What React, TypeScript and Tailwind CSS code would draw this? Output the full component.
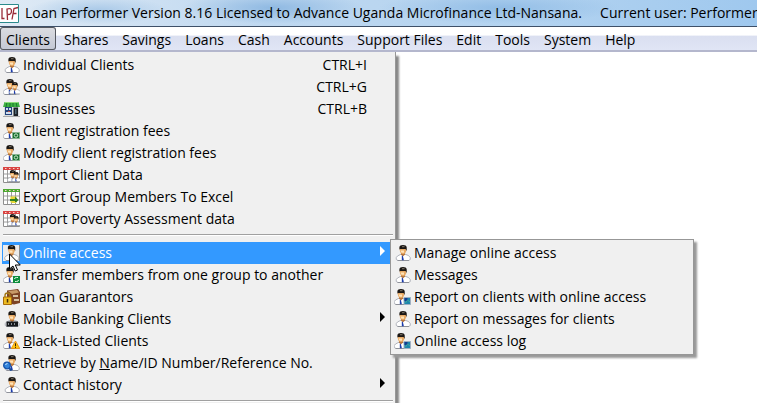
import React from "react";

type IconKind =
  | "person" | "group" | "shop" | "fees" | "import" | "export" | "online"
  | "transfer" | "guarantor" | "mobile" | "blacklist" | "search" | "report";

function Person({ coat = "#ffffff" }: { coat?: string }) {
  return (
    <g>
      <path d="M.8 14.500Q0 12.500 2 11L5.500 9.200H9.500L13 10.500Q15.500 12.500 14.800 14.500L13 15.500H2.500Z" fill={coat} stroke="#a9adb5" strokeWidth=".9" />
      <path d="M2 15.500h11.500" stroke="#85888f" strokeWidth=".8" />
      <path d="M5.500 7.500h4v2L7.500 11.500 5.500 9.500Z" fill="#b87840" />
      <path d="M4.300 3h6.400v3.500Q10 9 7.500 9T4.300 6Z" fill="#e9ab66" />
      <path d="M5 5.500h3.500v2.300H6Z" fill="#ffe3b8" />
      <path d="M3.900 4.500V2Q4.200 0 7.500 0T11.200 2.300V6L10 4H5Z" fill="#1a1613" />
      <path d="M6.500 1.200h2.500v1H6.500Z" fill="#81796b" />
      <path d="m6.300 10.500 1 .5 1 3.500-.6 1-1.400-.5Z" fill="#1c3cab" />
    </g>
  );
}

function Sheet({ head }: { head: string }) {
  return (
    <g>
      <path d="M.5 1h16v14.500H.5Z" fill="#fff" stroke="#8e8e8e" />
      <path d="M0 0h17v3H0Z" fill={head} />
      <path d="M2 1.500h1.500M6 1.500h1.500M10 1.500h1.500M14 1.500h1.500" stroke="#f7d7cf" />
      <path d="M1 7h15M1 11h15M4.500 3v12M8.500 3v12M12.500 3v12" stroke="#929292" strokeWidth=".9" />
    </g>
  );
}

function MenuIcon({ kind }: { kind: IconKind }) {
  return (
    <svg viewBox="0 0 17 16" className="h-4 w-[17px] shrink-0" aria-hidden="true">
      {kind === "person" && <g transform="translate(1.500 0)"><Person /></g>}
      {kind === "online" && (
        <g>
          <path d="M0 0h17v16H0Z" fill="#ececec" />
          <path d="M16.500 0v16" stroke="#8c8c8c" />
          <g transform="translate(1 0)"><Person /></g>
        </g>
      )}
      {kind === "group" && (
        <g>
          <g transform="translate(-.500 0)"><Person /></g>
          <g transform="translate(6 3) scale(.78)"><Person /></g>
        </g>
      )}
      {kind === "shop" && (
        <g>
          <path d="M1 5h15v10H1Z" fill="#d9dde0" />
          <path d="M2 6h7v8H2Z" fill="#24437c" />
          <path d="M3 7h2v2H3ZM6 7h2v2H6ZM3 11h5v2H3Z" fill="#cfdcec" />
          <path d="M5 10h2v1H5Z" fill="#b84b46" />
          <path d="M10.500 6.500h4.500v8.500h-4.500Z" fill="#1c2126" />
          <path d="M12 8h1.500v5H12Z" fill="#4f6774" />
          <path d="M1.500 1h14L17 6H0Z" fill="#3fb043" />
          <path d="M4 1 3 6M7 1v5M10 1v5M13 1l1 5" stroke="#187d2b" />
          <path d="M2 1.500h13" stroke="#8bdc78" />
          <path d="M0 15.500h17" stroke="#aaaaaa" />
        </g>
      )}
      {(kind === "fees" || kind === "transfer" || kind === "report" || kind === "blacklist") && (
        <g transform="translate(-.500 0)"><Person /></g>
      )}
      {kind === "fees" && (
        <g>
          <path d="M9.500 9.500h7v6h-7Z" fill="#17702f" stroke="#8ab391" />
          <circle cx="13" cy="12.500" r="1.700" fill="none" stroke="#cce6cc" />
        </g>
      )}
      {kind === "transfer" && (
        <g>
          <path d="M10 9h7v7h-7Z" fill="#0d8d3c" />
          <path d="M11.500 12q0-1.500 2-1.500h1.500M15.500 13q0 1.500-2 1.500H12" fill="none" stroke="#e2f6e3" />
        </g>
      )}
      {kind === "report" && (
        <g>
          <path d="M10 8.500h6.500v7H10Z" fill="#1d86ad" stroke="#9fb0c2" />
          <path d="M10.500 9h3v3h-3Z" fill="#123d91" />
          <path d="m11.500 14 2-3 2.500 2" fill="none" stroke="#43a59c" />
        </g>
      )}
      {kind === "blacklist" && (
        <g>
          <path d="m12.500 8 4.300 7.500H8.200Z" fill="#ffc414" stroke="#e58a0a" strokeWidth=".8" />
          <path d="M12.500 10.300v2.700M12.500 13.700v1.200" stroke="#3a2300" />
        </g>
      )}
      {kind === "import" && (
        <g>
          <Sheet head="#d94442" />
          <g transform="translate(4 3) scale(.75)"><Person /></g>
          <g transform="translate(8.500 5) scale(.62)"><Person /></g>
        </g>
      )}
      {kind === "export" && (
        <g>
          <Sheet head="#4da832" />
          <path d="M7.500 7.500h6v6h-6Z" fill="#e7d936" />
          <path d="M7 10h5V7.500l3.500 3.500-3.500 3.500V12H7Z" fill="#2f7f25" />
          <path d="M9 13.500h4" stroke="#e7d936" />
        </g>
      )}
      {kind === "guarantor" && (
        <g>
          <path d="M4 1.500 15 0l2 3v11l-6 1.500L4 14Z" fill="#7d4425" />
          <path d="m5 2 9-1 2 2.500-7 1.500Z" fill="#c79a68" />
          <path d="M10 6h5v2h-5ZM11 10h5v2h-5Z" fill="#d5c0a0" />
          <path d="M2 9V6.500Q2 4 4.500 4T7 6.500V9" fill="none" stroke="#a47918" strokeWidth="1.400" />
          <path d="M.5 8h8v7.500h-8Z" fill="#edbb22" stroke="#a76c0b" />
          <path d="M4.500 10v3.500" stroke="#49310a" strokeWidth="1.500" />
        </g>
      )}
      {kind === "mobile" && (
        <g>
          <g transform="translate(1.500 0)"><Person coat="#e4e6ea" /></g>
          <path d="M3.500 10.500h11.500v5H3.500Z" fill="#16181c" />
          <path d="M5.500 12v2M8.500 12v2M11.500 12v2" stroke="#8a8d94" />
        </g>
      )}
      {kind === "search" && (
        <g>
          <g transform="translate(1.500 0)"><Person /></g>
          <path d="m6 13 2.500 2.500" stroke="#164a98" strokeWidth="2" />
          <circle cx="4" cy="10.500" r="3.300" fill="#3284dc" stroke="#1450a7" strokeWidth="1.300" />
          <path d="M2.500 10q.5-1.500 2-1.500" stroke="#c9e6ff" fill="none" />
        </g>
      )}
    </svg>
  );
}

type Item = { icon: IconKind; label: React.ReactNode; keys?: string; sub?: boolean; active?: boolean };

const groups: Item[][] = [
  [
    { icon: "person", label: "Individual Clients", keys: "CTRL+I" },
    { icon: "group", label: "Groups", keys: "CTRL+G" },
    { icon: "shop", label: "Businesses", keys: "CTRL+B" },
    { icon: "fees", label: "Client registration fees" },
    { icon: "fees", label: "Modify client registration fees" },
    { icon: "import", label: "Import Client Data" },
    { icon: "export", label: "Export Group Members To Excel" },
    { icon: "import", label: "Import Poverty Assessment data" },
  ],
  [
    { icon: "online", label: "Online access", sub: true, active: true },
    { icon: "transfer", label: "Transfer members from one group to another" },
    { icon: "guarantor", label: "Loan Guarantors" },
    { icon: "mobile", label: "Mobile Banking Clients", sub: true },
    { icon: "blacklist", label: <><u>B</u>lack-Listed Clients</> },
    { icon: "search", label: <>Retrieve by <u>N</u>ame/ID Number/Reference No.</> },
    { icon: "person", label: "Contact history", sub: true },
  ],
];

const submenu: Item[] = [
  { icon: "person", label: "Manage online access" },
  { icon: "person", label: "Messages" },
  { icon: "report", label: "Report on clients with online access" },
  { icon: "person", label: "Report on messages for clients" },
  { icon: "report", label: "Online access log" },
];

const menus = ["Clients", "Shares", "Savings", "Loans", "Cash", "Accounts", "Support Files", "Edit", "Tools", "System", "Help"];

function Row({ item }: { item: Item }) {
  return (
    <button
      type="button"
      role="menuitem"
      className={`flex h-[22px] w-full items-center gap-[3px] whitespace-nowrap pl-px text-left ${item.active ? "bg-[#3399ff] text-white" : ""}`}
    >
      <MenuIcon kind={item.icon} />
      <span className="grow">{item.label}</span>
      {item.keys && <span className="pr-7">{item.keys}</span>}
      {item.sub && (
        <svg viewBox="0 0 5 10" className="mr-2.5 mb-1 h-2.5 w-[5px]" aria-hidden="true">
          <path d="M0 0 5 5 0 10Z" fill="currentColor" />
        </svg>
      )}
    </button>
  );
}

function Divider() {
  return <div role="separator" className="mr-0.5 ml-px h-3 pt-1"><div className="h-0.5 border-t border-[#a0a0a0] bg-white" /></div>;
}

export default function App() {
  return (
    <div className="relative flex h-screen flex-col overflow-hidden bg-white font-['Open_Sans','Noto_Sans',sans-serif] text-[14px] leading-5 text-black">
      <header className="flex h-[27px] shrink-0 items-center gap-1.5 whitespace-pre border-b border-[#3e5068] bg-[radial-gradient(ellipse_70px_14px_at_13%_40%,#a9c9e8,transparent),radial-gradient(ellipse_90px_16px_at_36%_30%,#8fb9e2,transparent),radial-gradient(ellipse_120px_16px_at_66%_30%,#92bde6,transparent),linear-gradient(to_right,#dfeaf5,#bfd8f0_35%,#b3d3f0_70%,#9fc8ee)]">
        <svg viewBox="0 0 19 19" className="h-[19px] w-[19px] shrink-0" aria-hidden="true">
          <path d="M0 .5h18.500v18H0" fill="#fff" stroke="#2b8a8c" />
          <path d="M2 4v10.500h2.500M7.500 16 7 5q4.500-1.500 4.500 2T8 10.500M12 15.500 14 4.500l4-1M13 9.500h3.500" fill="none" stroke="#9a2b38" strokeWidth="1.300" />
        </svg>
        <h1>Loan Performer Version 8.16 Licensed to Advance Uganda Microfinance Ltd-Nansana.     Current user: Performer</h1>
      </header>
      <nav aria-label="Main menu" className="flex h-[25px] shrink-0 items-center gap-0.5 border-b-2 border-[#b4b7cd] bg-linear-to-b from-white from-35% via-[#dadff0] via-40% to-[#e0e5f5]">
        {menus.map((name, i) => (
          <button
            key={name}
            type="button"
            className={`h-[23px] whitespace-nowrap px-1.5 pt-0.5 ${i === 0 ? "rounded-[3px] bg-linear-to-b from-[#dcdde1] to-[#c3c7d4] ring-1 ring-[#55585f] ring-inset" : ""}`}
          >
            {name}
          </button>
        ))}
      </nav>
      <main className="grow" />
      <div role="menu" aria-label="Clients" className="absolute top-[52px] -bottom-5 left-0 w-[396px] border-r border-[#979797] bg-[#f0f0f0] pt-0.5 pl-0.5 shadow-[3px_4px_2px_#888888]">
        {groups.map((items, i) => (
          <div key={i}>
            {items.map((item, j) => <Row key={j} item={item} />)}
            <Divider />
          </div>
        ))}
      </div>
      <div role="menu" aria-label="Online access" className="absolute top-[239px] left-[390px] w-[304px] border border-[#979797] bg-[#f0f0f0] p-0.5 shadow-[3px_3px_2px_#999999]">
        {submenu.map((item, j) => <Row key={j} item={item} />)}
      </div>
      <svg viewBox="0 0 12 19" className="absolute top-[253px] left-[9px] h-[19px] w-3" aria-hidden="true">
        <path d="M.5 1v15l3.500-3 2.200 5 2.300-1-2.200-5h5Z" fill="#fff" stroke="#000" />
      </svg>
    </div>
  );
}
